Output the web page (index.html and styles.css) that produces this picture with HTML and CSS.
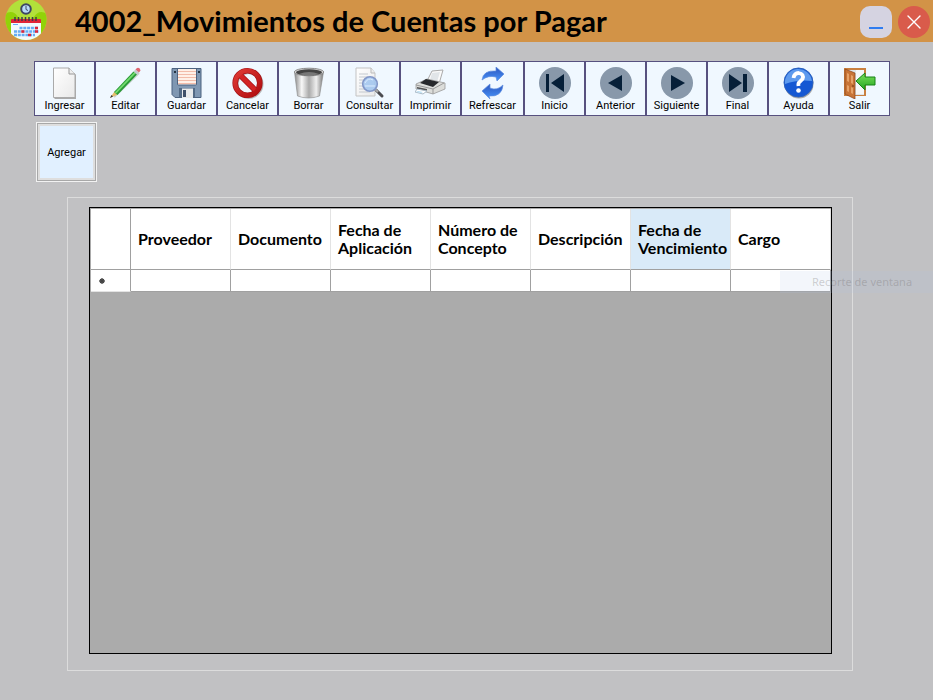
FILE: index.html
```html
<!DOCTYPE html>
<html lang="es">
<head>
<meta charset="utf-8">
<title>4002_Movimientos de Cuentas por Pagar</title>
<link rel="stylesheet" href="styles.css">
</head>
<body>
<header class="titlebar">
  <svg class="logo" viewBox="0 0 42 42" aria-hidden="true">
    <defs><clipPath id="disc"><circle cx="21" cy="19.500" r="20.500"/></clipPath></defs>
    <g clip-path="url(#disc)">
      <path fill="#b2e03a" d="M0-2h42v44H0z"/>
      <path fill="#92d208" d="M0 14q8-5 13 3l8 5 8-5q5-8 13-3v28H0z"/>
      <path fill="#f3fafc" d="M6 22h30v16q0 2-2 2H8q-2 0-2-2z"/>
      <path fill="#e02538" d="M6 20q0-1 1-1h28q1 0 1 1v3H6z"/>
      <path stroke="#3b3b4b" stroke-width="1.500" d="M10 17v4M13.500 17v4M17 17v4M20.500 17v4M24 17v4M27.500 17v4M31 17v4"/>
      <path stroke="#66adf5" stroke-width="2.600" stroke-dasharray="3 .8" d="M14.500 28h19M9 31.500h24.500M9 35h21"/>
      <path fill="#e02538" d="M30 26.700h3v2.600h-3zM16.300 30.200h3v2.600h-3zM30 30.200h3v2.600h-3zM23 33.700h3v2.600h-3z"/>
      <path fill="#66adf5" d="M8 24h5v1H8z"/>
      <circle cx="21" cy="9" r="4.800" fill="#b9dcf8" stroke="#3d4763" stroke-width="2"/>
      <path d="M21 6v3.500l2 1" fill="none" stroke="#3d4763"/>
    </g>
  </svg>
  <h1 class="title">4002_Movimientos de Cuentas por Pagar</h1>
  <button class="win minimize" type="button" aria-label="Minimizar">
    <svg viewBox="0 0 32 32"><path d="M9 22h14" stroke="#2f7cf0" stroke-width="2"/></svg>
  </button>
  <button class="win close" type="button" aria-label="Cerrar">
    <svg viewBox="0 0 32 32"><path d="m10 10 12 12M22 10 10 22" stroke="#fff" stroke-width="1.400" stroke-linecap="round"/></svg>
  </button>
</header>

<main class="content">
  <svg class="defs" aria-hidden="true">
    <defs>
      <linearGradient id="metal"><stop offset="0" stop-color="#888"/><stop offset=".25" stop-color="#f8f8f8"/><stop offset=".5" stop-color="#aaa"/><stop offset=".75" stop-color="#eee"/><stop offset="1" stop-color="#777"/></linearGradient>
      <linearGradient id="paper" x2="1" y2="1"><stop offset="0" stop-color="#fff"/><stop offset="1" stop-color="#e9e9e9"/></linearGradient>
      <linearGradient id="blue" x2="0" y2="1"><stop offset="0" stop-color="#2c55bd"/><stop offset="1" stop-color="#4794fa"/></linearGradient>
      <linearGradient id="green" x2="0" y2="1"><stop offset="0" stop-color="#7be05a"/><stop offset="1" stop-color="#22a520"/></linearGradient>
      <linearGradient id="red" x2="1" y2="1"><stop offset="0" stop-color="#e03a35"/><stop offset="1" stop-color="#b00d10"/></linearGradient>
    </defs>
  </svg>
  <nav class="toolbar" aria-label="Acciones">
    <button class="tool" type="button"><svg viewBox="0 0 32 32"><path d="M5.500 2H21l6 6v24H5.500z" fill="#aaa"/><path d="M4.500 1H20l6 6v23.500H4.500z" fill="url(#paper)" stroke="#aaa"/><path d="M20 1v6h6" fill="#eee" stroke="#999"/></svg>Ingresar</button>
    <button class="tool" type="button"><svg viewBox="0 0 32 32"><path d="M4 30 29 6" stroke="#c9d2d0" stroke-width="2"/><path d="m4.500 24.500 3 3L0 31z" fill="#e5bd6b"/><path d="m0 31 1.500-3 1.500 1.500z" fill="#333"/><path d="M4 25 23.500 4.500l3.500 3L7.500 28z" fill="#2a9a37"/><path d="M4.800 25.500 24.500 5l1.200 1.200L6.300 26.500z" fill="#74dc6f"/><path d="m23.500 4.500 2-2 3.500 3-2 2z" fill="#c3c9ce"/><path d="m25.500 2.500 1.500-1.500q3-1 3.500 2.500L29 5.500z" fill="#df6570"/></svg>Editar</button>
    <button class="tool" type="button"><svg viewBox="0 0 32 32"><path d="M1 1.500h29v29H4l-3-3z" fill="#7f97b2" stroke="#4d6380"/><path d="M7 2h18v16H7z" fill="#fff0e7"/><path d="M7 4.500h18M7 7.500h18M7 10.500h18M7 13.500h18M7 16.500h18" stroke="#f2bcaa"/><path d="M6.500 2v15q0 1 1 1h17q1 0 1-1V2" fill="none" stroke="#4d6380"/><path d="M3 4h2v2H3zM27 4h2v2h-2z" fill="#263544"/><path d="M8 21h16v9H8z" fill="#536a85"/><path d="M11 21.500h11V31H11z" fill="#e9ebec"/><path d="M12 23h3v7h-3z" fill="#40516a"/></svg>Guardar</button>
    <button class="tool" type="button"><svg viewBox="0 0 32 32"><circle cx="16.500" cy="17" r="12.500" fill="none" stroke="#b9b9b9" stroke-width="5"/><path d="m7 7 17 17" stroke="#a41216" stroke-width="6"/><circle cx="15.500" cy="16" r="12.300" fill="none" stroke="#a41216" stroke-width="5.600"/><path d="m7 7 17 17" stroke="#d32425" stroke-width="4.500"/><circle cx="15.500" cy="16" r="12.300" fill="none" stroke="url(#red)" stroke-width="4.200"/></svg>Cancelar</button>
    <button class="tool" type="button"><svg viewBox="0 0 32 32"><path d="m1.500 5 3 24q11 4 22 0l4-24z" fill="url(#metal)" stroke="#888" stroke-width=".6"/><ellipse cx="16" cy="5" rx="14.700" ry="3.800" fill="#ddd" stroke="#888"/><ellipse cx="16" cy="5.300" rx="13" ry="3" fill="#434343"/><path d="M6 7q10-4 20 0-10 3-20 0" fill="#777"/></svg>Borrar</button>
    <button class="tool" type="button"><svg viewBox="0 0 32 32"><path d="M2 1h15l4 5v23H2z" fill="url(#paper)" stroke="#c3c3c3"/><path d="M17 1v5h4" fill="#eee" stroke="#bbb"/><path d="M5 7h9M5 10h12M5 13h6M5 16h4M5 19h4M5 22h5M5 25h11" stroke="#c4c9cf"/><path d="m22 23 6 6" stroke="#4c4c50" stroke-width="3" stroke-linecap="round"/><path d="m21 22 3 3" stroke="#aaa" stroke-width="2"/><circle cx="16" cy="17" r="7.300" fill="#9fc4ef" fill-opacity=".85" stroke="#8297c8" stroke-width="1.600"/><path d="M11 16q3-6 8-3M11 19h10" stroke="#dcecff" fill="none"/></svg>Consultar</button>
    <button class="tool" type="button"><svg viewBox="0 0 32 32"><path d="m12 14 5-10 11-1-4 14z" fill="#fafafa" stroke="#aaa"/><path d="m17 6 8-1-3 10-7-2z" fill="#e1e5e8"/><path d="m1 17 11-5 18 4v6L18 27 1 22z" fill="#dcddda" stroke="#999" stroke-width=".8"/><path d="m5 16 6-4 13 3-6 5z" fill="#26282b"/><path d="m1 18 17 4 11-6M18 22v5" stroke="#999" fill="none"/><path d="m2 20 10 2v2L2 22z" fill="#555"/><path d="m2 22 10 2-4 3-8-2z" fill="#fff" stroke="#a9b9c6"/><path d="m3 24 5 1-2 1-5-1z" fill="#b9def2"/></svg>Imprimir</button>
    <button class="tool wide" type="button"><svg viewBox="0 0 32 32"><path d="M5 13Q6 3 19 4V0l8 7-7 7-1-4q-8-2-14 3z" fill="url(#blue)" stroke="#5d8de0" stroke-width=".7"/><path d="M26 18q-1 12-14 11l1 3-8-8 8-7v4q7 3 13-3z" fill="url(#blue)" stroke="#5d8de0" stroke-width=".7"/></svg>Refrescar</button>
    <button class="tool" type="button"><svg viewBox="0 0 32 32"><circle cx="16" cy="16" r="16" fill="#8898aa"/><path d="M7 7h3v18H7zM25 7v18L12 16z" fill="#061f38"/></svg>Inicio</button>
    <button class="tool" type="button"><svg viewBox="0 0 32 32"><circle cx="16" cy="16" r="16" fill="#8898aa"/><path d="M22 8v16L8 16z" fill="#061f38"/></svg>Anterior</button>
    <button class="tool" type="button"><svg viewBox="0 0 32 32"><circle cx="16" cy="16" r="16" fill="#8898aa"/><path d="m10 8 14 8-14 8z" fill="#061f38"/></svg>Siguiente</button>
    <button class="tool" type="button"><svg viewBox="0 0 32 32"><circle cx="16" cy="16" r="16" fill="#8898aa"/><path d="m7 7 13 9-13 9zM21 7h4v18h-4z" fill="#061f38"/></svg>Final</button>
    <button class="tool" type="button"><svg viewBox="0 0 32 32"><circle cx="16" cy="17" r="14.500" fill="#aaa"/><circle cx="15.500" cy="15.500" r="14.500" fill="#1558d3" stroke="#2b61bd"/><path d="M2 17A13.500 13.500 0 0 1 29 14Q15 12 2 17" fill="#5d9aee"/><path d="M10.500 11q1-5 5-5 6 1 4 6l-3 3q-1.500 1-1 4" fill="none" stroke="#fff" stroke-width="3.800"/><circle cx="15.500" cy="23.500" r="2.300" fill="#fff"/></svg>Ayuda</button>
    <button class="tool" type="button"><svg viewBox="0 0 32 32"><path d="M0 1h22v28H0z" fill="#c9803f"/><path d="M2 3h18v25H2z" fill="#dfe5e8"/><path d="M12 3h8v24h-8z" fill="#f5f7f8"/><path d="m1 2 10 4v26L1 27z" fill="#c87436" stroke="#8a4218" stroke-width=".7"/><path d="m3 6 2 1v8l-2-1zM7 8l2 1v8l-2-1zM3 18l2 1v6l-2-1zM7 20l2 1v6l-2-1z" fill="#e6a268"/><path d="M9 18v2" stroke="#703510"/><path d="m12 14 9-8v4h10v8H21v5z" fill="url(#green)" stroke="#168216"/></svg>Salir</button>
  </nav>

  <button class="add" type="button">Agregar</button>

  <section class="group" aria-label="Movimientos">
    <div class="grid">
      <table class="data">
        <colgroup><col class="col-marker"><col><col><col><col><col><col><col></colgroup>
        <thead>
          <tr>
            <th scope="col"></th>
            <th scope="col">Proveedor</th>
            <th scope="col">Documento</th>
            <th scope="col">Fecha de Aplicación</th>
            <th scope="col">Número de Concepto</th>
            <th scope="col">Descripción</th>
            <th scope="col" class="active">Fecha de Vencimiento</th>
            <th scope="col">Cargo</th>
          </tr>
        </thead>
        <tbody>
          <tr><td class="marker"><svg viewBox="0 0 8 8" role="img" aria-label="Fila nueva"><circle cx="4" cy="4" r="2.500" fill="#555"/><path d="M4 1v6M1 4h6M2 2l4 4M6 2 2 6" stroke="#444"/></svg></td><td></td><td></td><td></td><td></td><td></td><td></td><td></td></tr>
        </tbody>
      </table>
    </div>
  </section>
</main>
<div class="ghost">Recorte de ventana</div>
</body>
</html>
```
FILE: styles.css
```css
* { box-sizing: border-box; }

body {
  margin: 0;
  min-height: 100vh;
  display: flex;
  flex-direction: column;
  position: relative;
  background: #c1c1c3;
  color: #000;
  font-family: Roboto, "Liberation Sans", sans-serif;
}

button {
  font: inherit;
  color: inherit;
  padding: 0;
  cursor: pointer;
}

.titlebar {
  display: flex;
  align-items: center;
  height: 42px;
  padding: 0 3px 0 5px;
  background: #d29347;
}

.logo {
  width: 42px;
  height: 42px;
  flex: none;
}

.title {
  flex: 1;
  margin: 0 0 0 28px;
  font: 700 29px/42px Lato, sans-serif;
  white-space: nowrap;
}

.win {
  width: 32px;
  height: 32px;
  border: 0;
  margin: 2px 0 0 6px;
}

.win svg { display: block; fill: none; }
.minimize { background: #d5d3e1; border-radius: 10px; }
.close { background: #d95b4b; border-radius: 50%; }

.content {
  flex: 1;
  display: flex;
  flex-direction: column;
  align-items: flex-start;
  padding: 19px 34px 29px;
}

.defs { position: absolute; width: 0; height: 0; }

.toolbar { display: flex; }

.tool {
  display: flex;
  flex-direction: column;
  align-items: center;
  width: 61px;
  height: 55px;
  padding: 5px 0 0;
  border: 1px solid #57517f;
  background: #f0f8ff;
  font-size: 11px;
  line-height: 14px;
}

.tool svg { width: 32px; height: 32px; flex: none; }
.wide { width: 63px; }

.add {
  width: 61px;
  height: 60px;
  margin: 6px 0 0 2px;
  border: 1px solid #f2f2f2;
  outline: 1px solid #a8a8a8;
  outline-offset: -2px;
  box-shadow: inset 0 0 0 3px #dedede;
  background: #e1f0ff;
  font-size: 11px;
}

.group {
  flex: 1;
  display: flex;
  align-self: stretch;
  margin: 15px 46px 0 33px;
  padding: 9px 20px 16px 21px;
  border: 1px solid #dcdcdc;
}

.grid {
  flex: 1;
  min-width: 0;
  overflow: hidden;
  padding: 1px 0 0 1px;
  border: 1px solid #000;
  background: #ababab;
}

.data {
  width: 100%;
  table-layout: fixed;
  border-collapse: separate;
  border-spacing: 0;
  background: #fff;
}

.col-marker { width: 40px; }

th {
  height: 61px;
  padding: 0 0 0 7px;
  overflow: hidden;
  border-right: 1px solid #e3e3e3;
  border-bottom: 1px solid #a0a0a0;
  font: 700 16px/18px Lato, sans-serif;
  text-align: left;
}

th:first-child { border-right-color: #a0a0a0; }
.active { background: #d9eaf8; }

td {
  height: 22px;
  padding: 0;
  border-right: 1px solid #a0a0a0;
  border-bottom: 1px solid #a0a0a0;
}

.marker {
  padding-left: 7px;
  border-color: #e3e3e3 #a0a0a0 #e3e3e3 #e3e3e3;
}

.marker svg { display: block; width: 8px; height: 8px; }

.ghost {
  position: absolute;
  top: 271px;
  right: 0;
  width: 153px;
  padding-left: 32px;
  background: rgba(173, 193, 225, .15);
  color: rgba(110, 105, 105, .3);
  font: 11px/22px "Noto Sans", sans-serif;
  pointer-events: none;
}
```
